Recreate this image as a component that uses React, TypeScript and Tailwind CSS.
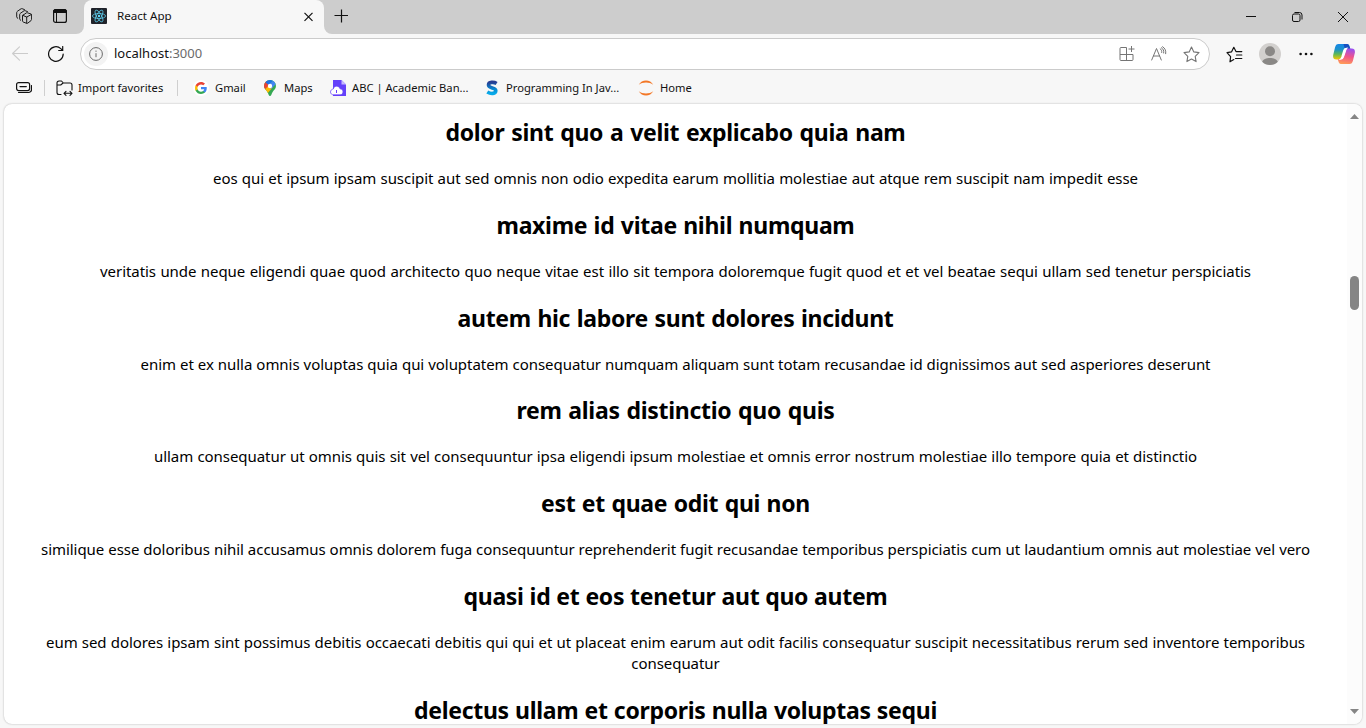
import React from "react";

type Post = { title: string; titleClass: string; lines: { text: string; className: string }[] };

const posts: Post[] = [
  {
    title: "dolor sint quo a velit explicabo quia nam",
    titleClass: "w-[460px]",
    lines: [{ text: "eos qui et ipsum ipsam suscipit aut sed omnis non odio expedita earum mollitia molestiae aut atque rem suscipit nam impedit esse", className: "w-[925px]" }],
  },
  {
    title: "maxime id vitae nihil numquam",
    titleClass: "w-[358px]",
    lines: [{ text: "veritatis unde neque eligendi quae quod architecto quo neque vitae est illo sit tempora doloremque fugit quod et et vel beatae sequi ullam sed tenetur perspiciatis", className: "w-[1151px]" }],
  },
  {
    title: "autem hic labore sunt dolores incidunt",
    titleClass: "w-[436px]",
    lines: [{ text: "enim et ex nulla omnis voluptas quia qui voluptatem consequatur numquam aliquam sunt totam recusandae id dignissimos aut sed asperiores deserunt", className: "w-[1070px]" }],
  },
  {
    title: "rem alias distinctio quo quis",
    titleClass: "w-[318px]",
    lines: [{ text: "ullam consequatur ut omnis quis sit vel consequuntur ipsa eligendi ipsum molestiae et omnis error nostrum molestiae illo tempore quia et distinctio", className: "w-[1043px]" }],
  },
  {
    title: "est et quae odit qui non",
    titleClass: "w-[269px]",
    lines: [{ text: "similique esse doloribus nihil accusamus omnis dolorem fuga consequuntur reprehenderit fugit recusandae temporibus perspiciatis cum ut laudantium omnis aut molestiae vel vero", className: "w-[1269px]" }],
  },
  {
    title: "quasi id et eos tenetur aut quo autem",
    titleClass: "w-[424px]",
    lines: [
      { text: "eum sed dolores ipsam sint possimus debitis occaecati debitis qui qui et ut placeat enim earum aut odit facilis consequatur suscipit necessitatibus rerum sed inventore temporibus", className: "w-[1259px]" },
      { text: "consequatur", className: "" },
    ],
  },
  { title: "delectus ullam et corporis nulla voluptas sequi", titleClass: "w-[523px]", lines: [] },
];

function TitleBar() {
  return (
    <div className="flex h-[34px] shrink-0 bg-[#cdcdcd]">
      <div className="w-[84px] bg-[#f7f7f7]">
        <div className="flex h-full items-start rounded-br-lg bg-[#cdcdcd] pl-4 pt-2">
          <svg width="16" height="16" viewBox="0 0 16 16" fill="none" stroke="#1a1a1a" strokeWidth="1" strokeLinejoin="round" strokeLinecap="round">
            <path d="M7 7.200 10.500 4.800a1.200 1.200 0 0 1 1 0l3.500 1.200q.6.300.6 1v4.500q0 .7-.6 1.100l-3.200 2.500a1.500 1.500 0 0 1-1.500.1L7.200 14q-.7-.4-.7-1.100V8q0-.6.5-.8zM7 7.400l3.700 1.700 4.600-2.600M10.700 9.100v6" />
            <path d="M4.600 12.300q-.9-.5-.9-1.400V6.500q0-.8.7-1.200L8 2.800q.6-.3 1.200-.1l2.300.9" />
            <path d="M1.700 10.300Q.7 9.800.7 8.900V4.500q0-.8.7-1.200L5 .8Q5.600.5 6.200.7l2.300.9" />
          </svg>
          <svg className="ml-5" width="16" height="16" viewBox="0 0 16 16" fill="none" stroke="#111">
            <rect x="1.600" y="1.600" width="12.800" height="12.800" rx="2" strokeWidth="1.200" />
            <path d="M1.500 3.500a2 2 0 0 1 2-2h9a2 2 0 0 1 2 2v1h-13z" fill="#111" />
            <path d="M4.500 5v9" strokeWidth="1" />
          </svg>
        </div>
      </div>
      <div className="flex h-[34px] w-[240px] items-start rounded-t-lg bg-[#f7f7f7] pl-[7px] pt-2">
        <svg width="16" height="16" viewBox="0 0 16 16" fill="none" stroke="#61dafb" strokeWidth=".7">
          <rect width="16" height="16" rx="1" fill="#20232a" stroke="none" />
          <ellipse cx="8" cy="8" rx="6.600" ry="2.500" />
          <ellipse cx="8" cy="8" rx="6.600" ry="2.500" transform="rotate(60 8 8)" />
          <ellipse cx="8" cy="8" rx="6.600" ry="2.500" transform="rotate(120 8 8)" />
          <circle cx="8" cy="8" r="1.200" fill="#61dafb" stroke="none" />
        </svg>
        <span className="ml-[10px] w-[54px] whitespace-nowrap text-[11.600px] leading-4">React App</span>
        <svg className="ml-[132px] mt-1" width="10" height="10" viewBox="0 0 10 10" stroke="#111" strokeWidth="1.200">
          <path d="m1.500.8 8 8M9.500.8l-8 8" />
        </svg>
      </div>
      <div className="grow bg-[#f7f7f7]">
        <div className="flex h-full rounded-bl-lg bg-[#cdcdcd]">
          <svg className="ml-[10px] mt-[9px]" width="14" height="14" viewBox="0 0 14 14" stroke="#111" strokeWidth="1.200">
            <path d="M7.500.5v13M.5 6.500h14" />
          </svg>
          <svg className="ml-auto mr-[17px] mt-[11px]" width="103" height="12" viewBox="0 0 103 12" fill="none" stroke="#111" strokeWidth="1">
            <path d="M0 5.500h10" />
            <rect x="46.500" y="3" width="7.500" height="7.500" rx="1.500" />
            <path d="M48.500 1.500h5a2.500 2.500 0 0 1 2.500 2.500v4.500" />
            <path d="m92 1 10 10M102 1 92 11" />
          </svg>
        </div>
      </div>
    </div>
  );
}

function Toolbar() {
  return (
    <div className="flex h-[40px] shrink-0 items-center pl-3">
      <svg width="16" height="16" viewBox="0 0 16 16" fill="none" stroke="#cbcbcb" strokeWidth="1.100" strokeLinecap="round" strokeLinejoin="round">
        <path d="M.6 7.500h15M7.500.8.6 7.500l6.900 6.700" />
      </svg>
      <svg className="ml-5" width="16" height="16" viewBox="0 0 16 16" fill="none" stroke="#111" strokeWidth="1.200" strokeLinecap="round">
        <path d="M15.200 8A7.300 7.300 0 1 1 12.800 2.600L14.500 4.300M14.700.5v4h-4" />
      </svg>
      <div className="ml-4 flex h-8 w-[1130px] items-center rounded-full border border-[#cbcbcb] bg-white pl-[3px] pr-[10px]">
        <span className="flex size-6 items-center justify-center rounded-full bg-[#f3f3f3]">
          <svg width="14" height="14" viewBox="0 0 14 14" fill="none" stroke="#6a6a6a">
            <circle cx="7" cy="7" r="6.400" />
            <path d="M7 6.200v4M7 3.600v1.200" />
          </svg>
        </span>
        <span className="ml-[6px] w-[90px] whitespace-nowrap text-[13px]">
          localhost<span className="text-[#6b6b6b]">:3000</span>
        </span>
        <svg className="ml-auto" width="16" height="16" viewBox="0 0 16 16" fill="none" stroke="#757575">
          <path d="M7.500 1.500H2a1 1 0 0 0-1 1v11a1 1 0 0 0 1 1h11a1 1 0 0 0 1-1V8.500H1M7.500 1.500v13M12.500 0v6M9.500 3h6" />
        </svg>
        <svg className="ml-4" width="16" height="16" viewBox="0 0 16 16" fill="none" stroke="#757575" strokeLinecap="round">
          <path d="M.7 14 5.500 2.500 10.300 14M2.400 10h6.200M9.200 2.800c1.300.8 1.700 2 1.500 3.700M10.400 1.700c2 1.300 2.600 3 2.300 5.300M11.600.7c2.600 1.600 3.500 4 3.100 7" />
        </svg>
        <svg className="-mr-px ml-4" width="17" height="17" viewBox="0 0 17 17" fill="none" stroke="#757575" strokeWidth="1.100" strokeLinejoin="round">
          <path d="m8.500 1 2.300 4.900 5.200.7-3.800 3.700.9 5.300-4.600-2.500-4.600 2.500.9-5.300L1 6.600l5.200-.7z" />
        </svg>
      </div>
      <svg className="ml-4" width="17" height="17" viewBox="0 0 17 17" fill="none" stroke="#111" strokeWidth="1.200" strokeLinejoin="round" strokeLinecap="round">
        <path d="M7.800 13.600 4 15.800l.6-5.100L1 6.600l4.600-.8L7.800 1.300 10 5.600h5.800M10.500 9h5.300M9.500 12.500h6.300" />
      </svg>
      <svg className="ml-4" width="22" height="22" viewBox="0 0 22 22">
        <circle cx="11" cy="11" r="11" fill="#d2d0ce" />
        <circle cx="11" cy="8.200" r="5" fill="#8a8886" />
        <path d="M3.200 18.700C4.500 13.600 17.500 13.600 18.800 18.700a11 11 0 0 1-15.600 0z" fill="#8a8886" />
      </svg>
      <svg className="ml-[18px]" width="14" height="4" viewBox="0 0 14 4" fill="#111">
        <circle cx="1.600" cy="2" r="1.300" />
        <circle cx="7" cy="2" r="1.300" />
        <circle cx="12.400" cy="2" r="1.300" />
      </svg>
      <svg className="ml-5 shrink-0" width="22" height="20" viewBox="0 0 22 20">
        <defs>
          <linearGradient id="left" x1="0" y1="0" x2="0" y2="1">
            <stop offset="0" stopColor="#1687e8" />
            <stop offset=".35" stopColor="#1b91cb" />
            <stop offset=".65" stopColor="#5cb757" />
            <stop offset="1" stopColor="#f8c800" />
          </linearGradient>
          <linearGradient id="right" x1=".6" y1="0" x2=".4" y2="1">
            <stop offset="0" stopColor="#9a4ff0" />
            <stop offset=".5" stopColor="#f0548a" />
            <stop offset="1" stopColor="#ff9b57" />
          </linearGradient>
        </defs>
        <path d="M5.500 0H14c1.600 0 2 .8 2.600 2.700L17.300 5h-3.500C12 5 11.600 6 11 8l-1.800 5.500C8.700 15 8 15.500 6.500 15.500H3.300C.8 15.500-.3 14 .2 11L2 3.500C2.700 1 3.500 0 5.500 0z" fill="url(#left)" />
        <path d="M10.500 0H14c1.600 0 2 .8 2.600 2.700L17.300 5h-3.500c-1.500 0-2-.5-2.500-2z" fill="#184fc0" />
        <path d="M16.500 20H8c-1.600 0-2-.8-2.600-2.700L4.700 15h3.500C10 15 10.400 14 11 12l1.800-5.500C13.300 5 14 4.500 15.500 4.500h3.200c2.500 0 3.600 1.500 3.100 4.500L20 16.500c-.7 2.500-1.500 3.500-3.500 3.500z" fill="url(#right)" />
        <path d="M11 6.200c.5-1.200 1-1.600 2.400-1.700-.6.600-.8 1.500-1.200 2.700l-1.800 5.300c-.6 1.700-1 2.400-2.600 2.500.8-.6 1-1.500 1.400-2.700z" fill="white" stroke="white" strokeWidth="1.500" />
      </svg>
    </div>
  );
}

function Favorites() {
  return (
    <div className="flex h-[29px] shrink-0 items-center whitespace-nowrap pb-px pl-4 text-[11.200px]">
      <svg width="16" height="12" viewBox="0 0 16 12" fill="none" stroke="#111" strokeWidth="1.200" strokeLinecap="round">
        <rect x=".6" y=".6" width="13" height="8" rx="2" />
        <path d="M4 4.600h6.300M2.500 10.500h10a3 3 0 0 0 3-3V3.500" />
      </svg>
      <span className="ml-3 h-4 w-px bg-[#cfcfcf]" />
      <svg className="ml-[11px]" width="17" height="16" viewBox="0 0 17 16" fill="none" stroke="#111" strokeWidth="1.100" strokeLinecap="round" strokeLinejoin="round">
        <path d="M5 14.500H3a2 2 0 0 1-2-2V3a2 2 0 0 1 2-2h2.500L7.300 3H14a2 2 0 0 1 2 2v5M1.200 5h3.500l2.400-2M8.200 13.300h7.600M10 11.300l-2 2 2 2M14 11.300l2 2-2 2" />
      </svg>
      <span className="ml-[5px] w-[85px]">Import favorites</span>
      <span className="ml-[14px] h-4 w-px bg-[#cfcfcf]" />
      <span className="ml-[15px] flex size-4 items-center justify-center rounded-full bg-white">
        <svg width="12" height="12" viewBox="0 0 24 24">
          <path fill="#4285F4" d="M23.500 12.300c0-.9-.1-1.600-.2-2.400H12v4.500h6.500c-.3 1.500-1.100 2.800-2.400 3.600v3h3.900c2.300-2.100 3.500-5.200 3.500-8.700z" />
          <path fill="#34A853" d="M12 24c3.200 0 6-1.100 8-2.900l-3.900-3c-1.100.7-2.500 1.200-4.100 1.200-3.100 0-5.800-2.100-6.700-5H1.300v3.100C3.300 21.300 7.300 24 12 24z" />
          <path fill="#FBBC05" d="M5.300 14.300c-.5-1.500-.5-3.100 0-4.600V6.600h-4c-1.700 3.400-1.700 7.400 0 10.800z" />
          <path fill="#EA4335" d="M12 4.800c1.800 0 3.300.6 4.600 1.800L20 3.200C17.900 1.200 15.200 0 12 0 7.300 0 3.300 2.700 1.300 6.600l4 3.100c.9-2.800 3.600-4.900 6.700-4.900z" />
        </svg>
      </span>
      <span className="ml-[6px] w-[31px]">Gmail</span>
      <svg className="ml-[18px]" width="12" height="16" viewBox="0 0 12 16">
        <defs>
          <clipPath id="pin"><path d="M6 0a6 6 0 0 1 6 6c0 3-2.500 4.300-3.500 6.200C7.500 14 7.300 16 6 16s-1.500-2-2.500-3.800C2.500 10.300 0 9 0 6a6 6 0 0 1 6-6z" /></clipPath>
        </defs>
        <g clipPath="url(#pin)">
          <path fill="#34A853" d="M0 0h12v16H0z" />
          <path fill="#FBBC04" d="M0 9.500 7 2l2 5-6 7-3-3z" />
          <path fill="#EA4335" d="M0 0h3l2.500 4.500L1.500 9 0 8z" />
          <path fill="#1A73E8" d="M1.300 2.200 5 5.200 9.500 0H3z" />
          <path fill="#4285F4" d="M4.500 5.500 9.500 0 12 4 7 9z" />
        </g>
        <circle cx="6" cy="6" r="2.200" fill="white" />
      </svg>
      <span className="ml-[8px] w-[30px]">Maps</span>
      <svg className="ml-4" width="17" height="16" viewBox="0 0 17 16">
        <path d="M3 0h8.500l4.500 4.500V16H3z" fill="#6440fa" />
        <path d="M11.500 0v4.500H16z" fill="#c6b8ff" />
        <path d="M3.700 14.800C-.7 14.800-.3 9.300 3.300 9c.8-4 6-3.500 6.700-.2 4 0 3.900 6 .1 6z" fill="white" stroke="#6440fa" strokeWidth=".7" />
        <path d="M6.500 10v3" stroke="#6440fa" />
      </svg>
      <span className="ml-[5px] w-[115px]">ABC | Academic Ban...</span>
      <svg className="ml-[19px]" width="12" height="16" viewBox="0 0 12 16" fill="none" strokeWidth="3.600">
        <defs><linearGradient id="s" x1="0" y1="0" x2="0" y2="1"><stop stopColor="#273e93" /><stop offset=".6" stopColor="#0788d1" /><stop offset="1" stopColor="#08aae9" /></linearGradient></defs>
        <path d="M10.600 3.500C8 1.800 2.500 1.800 2.500 5c0 3.800 7.300 2 7.300 5.700 0 3.300-5 3.500-8.500 1.300" stroke="url(#s)" />
      </svg>
      <span className="ml-2 w-[115px]">Programming In Jav...</span>
      <svg className="ml-[17px]" width="16" height="16" viewBox="0 0 16 16" fill="#f37726">
        <path d="M.8 4.700C3.500-1 12.500-1 15.200 4.700 11.500 1.800 4.500 1.800.8 4.700zM.8 11.300c2.700 5.700 11.700 5.700 14.400 0-3.700 2.900-10.700 2.900-14.400 0z" />
      </svg>
      <span className="ml-[6px]">Home</span>
    </div>
  );
}

export default function App() {
  return (
    <div className="flex h-[728px] w-[1366px] flex-col overflow-hidden bg-[#f7f7f7] font-['Noto_Sans','Open_Sans',sans-serif] text-[12px] text-[#111]">
      <TitleBar />
      <Toolbar />
      <Favorites />
      <div className="mx-1 mt-px flex h-[620px] shrink-0 overflow-hidden rounded-lg bg-white shadow-[0_0_2px_#0000004d]">
        <main className="flex w-[1343px] flex-col items-center pt-[12px] text-[15px] text-black">
          {posts.map((post) => (
            <article key={post.title} className="mb-[19.800px] flex shrink-0 flex-col items-center whitespace-nowrap last:mb-0">
              <h2 className={`mb-5 text-[23px] font-bold leading-8 tracking-[-0.3px] [text-align-last:justify] ${post.titleClass}`}>{post.title}</h2>
              {post.lines.map((line) => (
                <p key={line.text} className={`leading-[21px] tracking-[-0.05px] [text-align-last:justify] ${line.className}`}>{line.text}</p>
              ))}
            </article>
          ))}
        </main>
        <aside className="flex w-[15px] flex-col items-center bg-[#fcfcfc] pt-[10px]">
          <svg width="9" height="5" viewBox="0 0 9 5" fill="#858585"><path d="M4.500 0 9 5H0z" /></svg>
          <div className="mt-[157px] h-[34px] w-[9px] rounded-full bg-[#858585]" />
          <svg className="mt-[399px]" width="9" height="5" viewBox="0 0 9 5" fill="#858585"><path d="M0 0h9L4.500 5z" /></svg>
        </aside>
      </div>
    </div>
  );
}
